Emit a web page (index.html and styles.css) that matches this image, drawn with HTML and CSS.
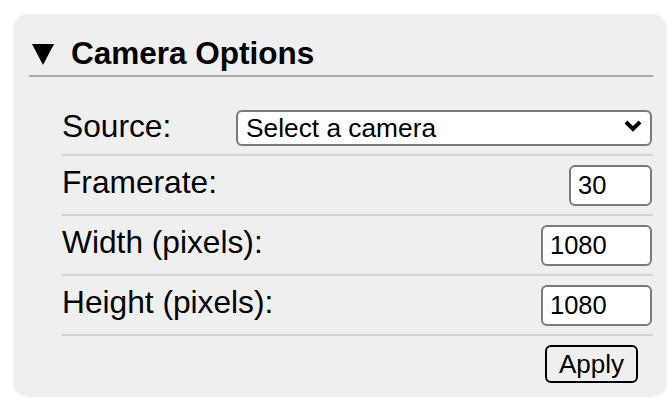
FILE: index.html
```html
<!DOCTYPE html>
<html>
<head>
<meta charset="utf-8">
<link rel="stylesheet" href="styles.css">
</head>
<body>
<div class="panel">
  <div class="header">
    <svg class="marker" width="22" height="21" viewBox="0 0 22 21"><polygon points="0,0 22,0 11,21" fill="#000"/></svg>
    <span class="title">Camera Options</span>
  </div>
  <div class="table">
    <div class="row row-source">
      <span class="label label-source">Source:</span>
      <div class="select-wrap">
        <select class="select"><option>Select a camera</option></select>
        <svg class="chevron" width="18" height="12" viewBox="0 0 18 12"><polyline points="2,2 9,9 16,2" fill="none" stroke="#000" stroke-width="4"/></svg>
      </div>
    </div>
    <div class="row">
      <span class="label">Framerate:</span>
      <input class="field field-short" type="text" value="30">
    </div>
    <div class="row">
      <span class="label">Width (pixels):</span>
      <input class="field field-long" type="text" value="1080">
    </div>
    <div class="row">
      <span class="label">Height (pixels):</span>
      <input class="field field-long" type="text" value="1080">
    </div>
    <div class="row row-last">
      <button class="apply">Apply</button>
    </div>
  </div>
</div>
</body>
</html>
```

FILE: styles.css
```css
html, body {
  margin: 0;
  padding: 0;
  background: #ffffff;
}
body {
  font-family: "Liberation Sans", Arial, sans-serif;
  color: #000;
}
.panel {
  margin: 14px 0 0 13px;
  width: 654px;
  height: 383px;
  box-sizing: border-box;
  background: #efefef;
  border-radius: 15px;
  padding: 0 14px 0 16px;
}
.header {
  display: flex;
  align-items: center;
  padding: 20px 0 3px 3px;
  border-bottom: 2px solid #aaaaaa;
  height: 38px;
}
.marker {
  display: block;
  margin-right: 17px;
  margin-top: 2px;
}
.title {
  font-weight: bold;
  font-size: 31.5px;
  line-height: 36px;
}
.table {
  margin: 24px 0 0 33px;
}
.row {
  display: flex;
  justify-content: space-between;
  align-items: flex-start;
  padding: 9px 0 8px;
  border-bottom: 2px solid #d3d3d3;
}
.row-source {
  justify-content: flex-start;
  padding-top: 7px;
}
.row-last {
  border-bottom: none;
  justify-content: flex-end;
  padding-right: 15px;
}
.label {
  font-size: 31.7px;
  line-height: 36px;
  margin-top: -1px;
}
.label-source {
  width: 174px;
  flex: none;
  margin-top: 0;
}
.select-wrap {
  position: relative;
  flex: 1;
  margin: 2px 1px 0 0;
}
.select {
  -webkit-appearance: none;
  appearance: none;
  display: block;
  width: 100%;
  height: 36px;
  box-sizing: border-box;
  border: 2px solid #7a7a7a;
  border-radius: 6px;
  background: #ffffff;
  font-family: "Liberation Sans", Arial, sans-serif;
  font-size: 26.3px;
  padding: 0 0 0 8px;
  color: #000;
}
.chevron {
  position: absolute;
  right: 10px;
  top: 10px;
  pointer-events: none;
}
.field {
  height: 41px;
  box-sizing: border-box;
  border: 2px solid #7a7a7a;
  border-radius: 6px;
  background: #ffffff;
  font-family: "Liberation Sans", Arial, sans-serif;
  font-size: 25.5px;
  padding: 0 0 0 7px;
  margin-right: 1px;
  color: #000;
}
.field-short {
  width: 83px;
}
.field-long {
  width: 111px;
}
.apply {
  width: 93px;
  height: 38px;
  box-sizing: border-box;
  border: 2px solid #000;
  border-radius: 6px;
  background: #efefef;
  font-family: "Liberation Sans", Arial, sans-serif;
  font-size: 26px;
  padding: 0;
  color: #000;
}
```
